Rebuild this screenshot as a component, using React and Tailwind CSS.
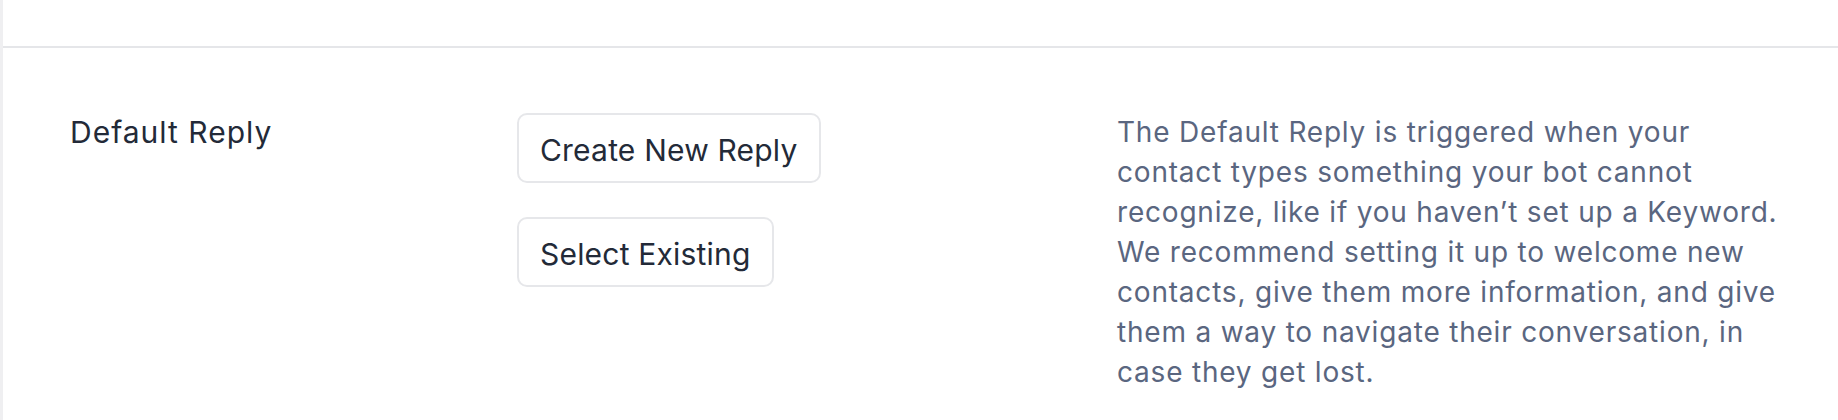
export default function App() {
  return (
    <div className="min-h-screen bg-white flex" style={{ fontFamily: 'Inter, "Noto Sans", sans-serif' }}>
      <div className="w-[3px] bg-[#efeff1] shrink-0" />
      <div className="flex-1">
        <div className="h-[48px] border-b-2 border-[#e5e6e9]" />
        <div className="flex pt-[64px] pl-[67px]">
          <div className="w-[447px] shrink-0">
            <h3 className="text-[30px] leading-[40px] tracking-[1px] text-[#232a38]">Default Reply</h3>
          </div>
          <div className="w-[600px] shrink-0 flex flex-col items-start gap-[34px] pt-[1px]">
            <button className="pt-[15px] pb-[11px] px-[21px] border-2 border-[#e6e7ea] rounded-[10px] bg-white text-[30px] leading-[40px] tracking-[0.2px] text-[#232a38]">
              Create New Reply
            </button>
            <button className="pt-[15px] pb-[11px] px-[21px] border-2 border-[#e6e7ea] rounded-[10px] bg-white text-[30px] leading-[40px] tracking-[0.2px] text-[#232a38]">
              Select Existing
            </button>
          </div>
          <p className="w-[672px] text-[28px] leading-[40px] tracking-[0.8px] text-[#5a6680]">
            The Default Reply is triggered when your contact types something your bot cannot recognize, like if you haven’t set up a Keyword. We recommend setting it up to welcome new contacts, give them more information, and give them a way to navigate their conversation, in case they get lost.
          </p>
        </div>
      </div>
    </div>
  )
}
